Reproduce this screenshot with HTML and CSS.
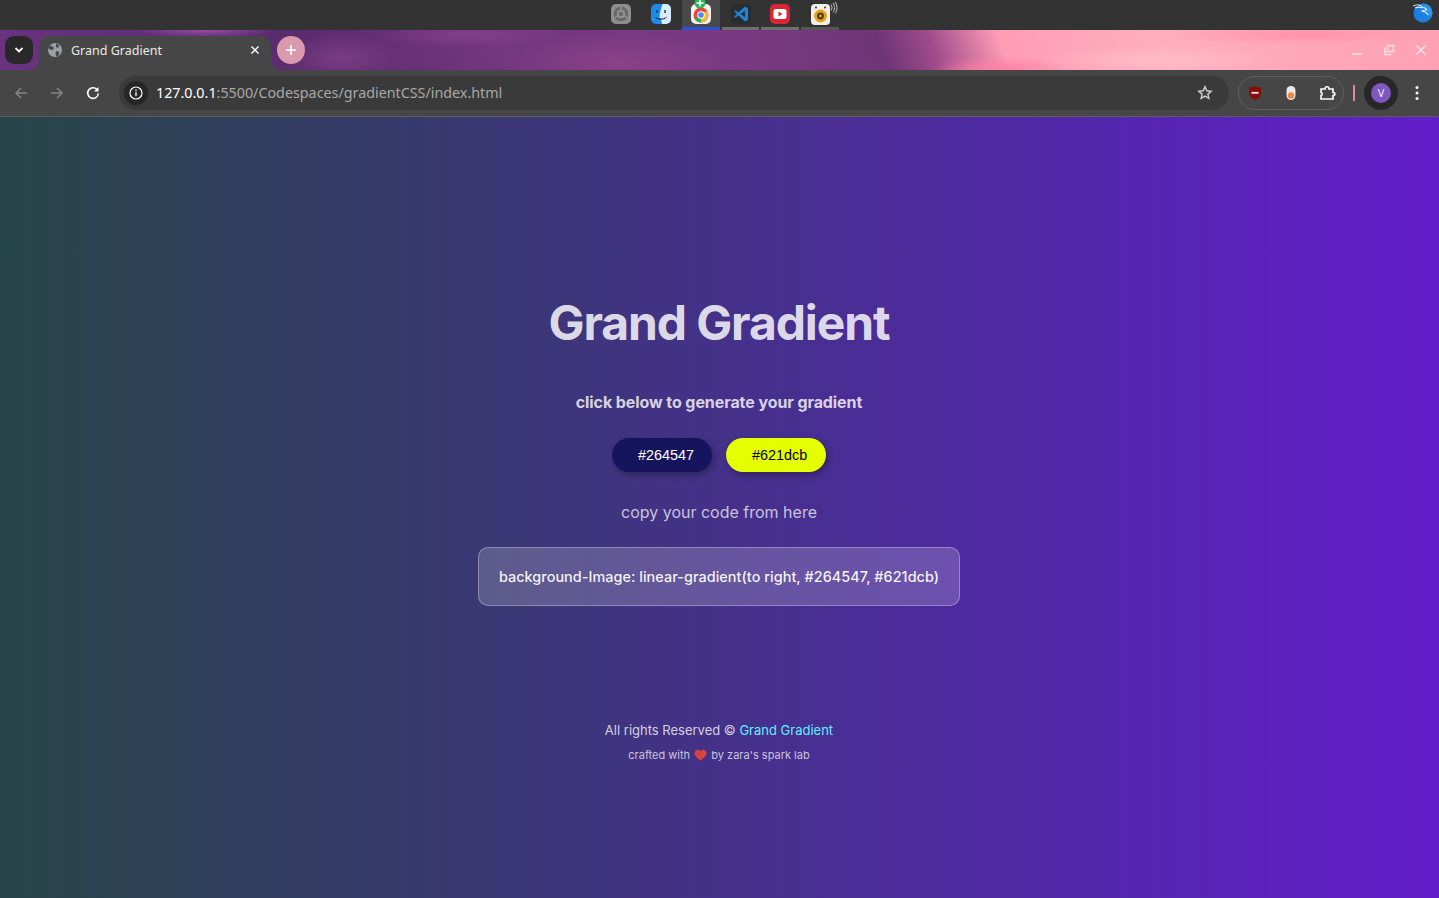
FILE: index.html
```html
<!DOCTYPE html>
<html lang="en">
<head>
<meta charset="utf-8">
<title>Grand Gradient</title>
<link rel="stylesheet" href="styles.css">
</head>
<body>
<div class="dock-bar">
  <div class="dock">
    <div class="dock-item">
      <svg class="dock-icon" viewBox="0 0 22 22"><rect x="1" y="1" width="20" height="20" rx="5" fill="#8d8d8d"/><circle cx="11" cy="11" r="8" fill="#6a6a6a" stroke="#a0a0a0" stroke-width=".8"/><circle cx="11" cy="11" r="3.200" fill="none" stroke="#9a9a9a" stroke-width="1.500"/><path d="M11 4v4M5 14.500l3-2M17 14.500l-3-2" stroke="#989898" stroke-width="1.200"/></svg>
    </div>
    <div class="dock-item">
      <svg class="dock-icon" viewBox="0 0 22 22"><rect x="1" y="1" width="20" height="20" rx="5" fill="#1c8bec"/><path d="M12.500 1H16a5 5 0 0 1 5 5v10a5 5 0 0 1-5 5h-4c-.6-3-.9-4-.9-6H9.500c0-5 1.500-9 3-14z" fill="#d9ecfb"/><path d="M7 7v3M15 7v3" stroke="#123" stroke-width="1.300"/><path d="M5.500 14.500c3 2.300 8 2.300 11-.3" fill="none" stroke="#123" stroke-width="1"/></svg>
    </div>
    <div class="dock-item dock-item-active">
      <svg class="dock-icon" viewBox="0 0 22 22"><rect x="1" y="1" width="20" height="20" rx="5" fill="#f1f1f1"/><circle cx="11" cy="12" r="7.500" fill="#e8453c"/><path d="M11 12 4.500 15.800A7.500 7.500 0 0 0 11 19.500z" fill="#34a853"/><path d="M11 12v7.500A7.500 7.500 0 0 0 18.500 12c0-1.200-.2-2-.7-3.200H11z" fill="#f9bb2d"/><circle cx="11" cy="12" r="3.800" fill="#fff"/><circle cx="11" cy="12" r="2.800" fill="#4a8bf5"/></svg>
      <svg class="dock-plus" viewBox="0 0 12 12"><circle cx="6" cy="6" r="5.500" fill="#2fb35a"/><path d="M6 2.500v7M2.500 6h7" stroke="#fff" stroke-width="1.500"/></svg>
    </div>
    <div class="dock-item dock-item-open dock-item-narrow">
      <svg class="dock-icon" viewBox="0 0 22 22"><rect x="1" y="1" width="20" height="20" rx="5" fill="#2a2c30"/><path d="M15 3.500 8.500 9.500 5.500 7.200 4 8l3 3-3 3 1.500.8 3-2.300 6.500 6 3-1.400V4.900zM15 7.800v6.400L10.700 11z" fill="#1b86dc"/></svg>
    </div>
    <div class="dock-item dock-item-open">
      <svg class="dock-icon" viewBox="0 0 22 22"><rect x="1" y="1" width="20" height="20" rx="5" fill="#d92534"/><rect x="4.500" y="6" width="13" height="10" rx="2.500" fill="#fff"/><path d="m9.500 8.500 4 2.500-4 2.500z" fill="#d92534"/></svg>
    </div>
    <div class="dock-item dock-item-dim">
      <svg class="dock-speaker" viewBox="0 0 28 24"><rect x="1" y="2" width="19" height="21" rx="4" fill="#f2efe6"/><circle cx="10.500" cy="14" r="6.500" fill="#e9a21c"/><circle cx="10.500" cy="14" r="3.400" fill="#4a3a14"/><circle cx="10.500" cy="14" r="1.400" fill="#e9a21c"/><circle cx="6" cy="5.500" r="1" fill="#333"/><circle cx="15" cy="5.500" r="1" fill="#333"/><path d="M21 2.500c1.300 1.500 1.300 4.500 0 6M23 1c2 2.300 2 7 0 9.300M25 0c2.700 3 2.700 8.500 0 11.500" fill="none" stroke="#c8c8c8" stroke-width="1"/></svg>
    </div>
  </div>
  <svg class="tray-icon" viewBox="0 0 20 20"><circle cx="10" cy="10" r="9.500" fill="#1f7fe0"/><path d="M10 .5a9.500 9.500 0 0 1 9.500 9.500c0 2-2 4-6 2" fill="#2c97ea"/><path d="M0 3c4-2 8-1 10 1.500 2 0 3 1 3.500 2.500-2 0-3 0-4.500 1 2 .5 5 1.500 6 4M2 5c3-1 5-1 7 0" fill="none" stroke="#e6f2fb" stroke-width="1.100"/></svg>
</div>

<header class="tab-strip">
  <button class="tab-search" type="button">
    <svg class="tab-search-icon" viewBox="0 0 10 10"><path d="m1.500 3 3.500 3.500L8.500 3" fill="none" stroke="#fff" stroke-width="1.800"/></svg>
  </button>
  <div class="tab">
    <svg class="favicon" viewBox="0 0 16 16"><circle cx="8" cy="8" r="7" fill="#9aa0a6"/><path d="M3 3.500c2 .5 3 1 4 2.500L5.500 8 3 7.500 1.200 6zM9 1.500c1 1 2.500 1 3.500 2L10.500 6 9 5zM9 9l3.500 1-1 3.500L9.500 14.500 8.500 12z" fill="#464646"/></svg>
    <span class="tab-title">Grand Gradient</span>
    <svg class="tab-close" viewBox="0 0 10 10"><path d="m1.500 1.500 7 7m0-7-7 7" stroke="#fff" stroke-width="1.400"/></svg>
  </div>
  <button class="new-tab" type="button">
    <svg class="new-tab-icon" viewBox="0 0 12 12"><path d="M6 1v10M1 6h10" stroke="#fff" stroke-width="1.700"/></svg>
  </button>
  <div class="window-controls">
    <svg class="win-icon" viewBox="0 0 12 12"><path d="M1 10h10" stroke="#f6e3e8" stroke-width="1.600"/></svg>
    <svg class="win-icon" viewBox="0 0 12 12"><path d="M4.500 1.500h6v6h-6zM2 3.500v7h6.500" fill="none" stroke="#f6e3e8" stroke-width="1.500"/></svg>
    <svg class="win-icon" viewBox="0 0 12 12"><path d="m1.500 1.500 9 9m0-9-9 9" stroke="#f6e3e8" stroke-width="1.600"/></svg>
  </div>
</header>

<nav class="toolbar">
  <svg class="nav-icon" viewBox="0 0 14 14"><path d="M13 7H2M7 2 2 7l5 5" fill="none" stroke="#858585" stroke-width="1.500"/></svg>
  <svg class="nav-icon" viewBox="0 0 14 14"><path d="M1 7h11M7 2l5 5-5 5" fill="none" stroke="#858585" stroke-width="1.500"/></svg>
  <svg class="nav-icon" viewBox="0 0 14 14"><path d="M11.500 4.200A5.300 5.300 0 1 0 12.300 7.500" fill="none" stroke="#fff" stroke-width="1.600"/><path d="M12.500 1v4.500H8z" fill="#fff"/></svg>
  <div class="omnibox">
    <span class="site-info">
      <svg class="site-info-icon" viewBox="0 0 14 14"><circle cx="7" cy="7" r="6" fill="none" stroke="#fff" stroke-width="1.200"/><path d="M7 6v4.200M7 3.600v1.300" stroke="#fff" stroke-width="1.300"/></svg>
    </span>
    <span class="url"><span class="url-host">127.0.0.1</span>:5500/Codespaces/gradientCSS/index.html</span>
    <svg class="star" viewBox="0 0 16 16"><path d="m8 1.800 1.800 4 4.400.4-3.300 2.900 1 4.300L8 11.100l-3.900 2.300 1-4.300-3.300-2.900 4.400-.4z" fill="none" stroke="#d0d0d0" stroke-width="1.400"/></svg>
  </div>
  <div class="extensions">
    <svg class="ext-icon" viewBox="0 0 16 16"><path d="M8 1c2 1 4 1.500 6 1.500V8c0 3-2.500 5.500-6 7-3.500-1.500-6-4-6-7V2.500C4 2.500 6 2 8 1z" fill="#8a0b0b"/><path d="M4.500 7.800h7" stroke="#eee" stroke-width="1.800"/></svg>
    <svg class="ext-icon" viewBox="0 0 16 16"><rect x="3.500" y="1" width="9" height="14" rx="4.500" fill="#e8e8e8"/><circle cx="8" cy="10.500" r="3.200" fill="#f08a35"/></svg>
    <svg class="ext-icon" viewBox="0 0 18 18"><path d="M2 5h4c0-3 4-3 4 0h4v3.500c2.500 0 2.500 3 0 3V15H2v-3.500c1.500 0 1.500-3 0-3z" fill="none" stroke="#fff" stroke-width="1.600"/></svg>
  </div>
  <span class="toolbar-divider"></span>
  <div class="avatar-ring"><span class="avatar">V</span></div>
  <svg class="menu-dots" viewBox="0 0 4 16"><circle cx="2" cy="2.500" r="1.500" fill="#fff"/><circle cx="2" cy="8" r="1.500" fill="#fff"/><circle cx="2" cy="13.500" r="1.500" fill="#fff"/></svg>
</nav>

<main class="page">
  <h1 class="title">Grand Gradient</h1>
  <h3 class="subtitle">click below to generate your gradient</h3>
  <div class="buttons">
    <button class="color-btn color-btn-dark" type="button">#264547</button>
    <button class="color-btn color-btn-lime" type="button">#621dcb</button>
  </div>
  <p class="copy-label">copy your code from here</p>
  <div class="code-box">background-Image: linear-gradient(to right, #264547, #621dcb)</div>
  <footer class="footer">
    <p class="rights">All rights Reserved © <a class="brand-link" href="#">Grand Gradient</a></p>
    <p class="crafted">crafted with <svg class="heart" viewBox="0 0 14 13"><path d="M7 12.500C3 9.500.5 7.300.5 4.300.5 2.200 2.100.8 3.900.8 5.200.8 6.300 1.500 7 2.700 7.700 1.500 8.800.8 10.100.8c1.800 0 3.400 1.400 3.400 3.500 0 3-2.500 5.200-6.500 8.200z" fill="#d9423f"/></svg> by zara's spark lab</p>
  </footer>
</main>
</body>
</html>
```

FILE: styles.css
```css
* { box-sizing: border-box; }
html, body { margin: 0; height: 898px; overflow: hidden; }
body {
  display: flex;
  flex-direction: column;
  font-family: "Inter", "Liberation Sans", sans-serif;
  background: #333;
}
.dock-bar {
  flex: 0 0 30px;
  display: flex;
  justify-content: center;
  position: relative;
  background: #333;
}
.dock { display: flex; margin-left: 2px; }
.dock-item {
  width: 40px;
  height: 30px;
  display: flex;
  align-items: flex-start;
  justify-content: center;
  padding-top: 3px;
  position: relative;
  border-bottom: 3px solid transparent;
  background-clip: padding-box;
}
.dock-item-active { border-bottom-color: #2b4fd6; background-color: #494949; margin: 0 1px; width: 38px; }
.dock-item-open { border-bottom-color: #6f6f6f; margin: 0 1px; width: 38px; }
.dock-item-narrow { width: 37px; }
.dock-item-dim { border-bottom-color: #565656; margin: 0 1px; width: 38px; }
.dock-icon { width: 22px; height: 22px; flex: none; }
.dock-speaker { width: 28px; height: 24px; flex: none; margin: -1px 0 0 7px; }
.dock-plus {
  position: absolute;
  top: -3px;
  left: 12px;
  width: 12px;
  height: 12px;
}
.tray-icon { position: absolute; right: 6px; top: 3px; width: 20px; height: 20px; }

.tab-strip {
  flex: 0 0 40px;
  display: flex;
  align-items: flex-start;
  padding: 6px 12px 0 5px;
  background:
    radial-gradient(ellipse 70px 8px at 205px 0, #94509a, transparent),
    radial-gradient(ellipse 90px 12px at 470px 5px, #84408a, transparent),
    radial-gradient(ellipse 60px 25px at 340px 70%, #7a3c86, transparent),
    radial-gradient(ellipse 110px 30px at 620px 80%, #8a4288, transparent),
    radial-gradient(ellipse 70px 14px at 1000px 40px, #ff7fa4, transparent),
    radial-gradient(ellipse 120px 14px at 1160px 30px, #ffbcc8, transparent),
    radial-gradient(ellipse 130px 10px at 1300px 5px, #ff93ab, transparent),
    linear-gradient(70deg, #6a3380 0, #5a2a6e 290px, #743780 480px, #7a3982 700px, #6e3576 835px, #a04c8c 885px, #ff9cb6 950px, #ffaebf 1100px, #ffa0b4 1366px);
}
.tab-search {
  width: 28px;
  height: 28px;
  border: 0;
  padding: 0;
  border-radius: 9px;
  background: #282828;
  display: flex;
  align-items: center;
  justify-content: center;
}
.tab-search-icon { width: 10px; height: 10px; }
.tab {
  width: 232px;
  height: 34px;
  margin-left: 6px;
  padding: 0 11px 6px 8px;
  display: flex;
  align-items: center;
  position: relative;
  background: #464646;
  border-radius: 10px 10px 0 0;
  color: #e8e8e8;
  font: 12.500px "Noto Sans", "Open Sans", sans-serif;
}
.tab::before,
.tab::after {
  content: "";
  position: absolute;
  bottom: 0;
  width: 10px;
  height: 10px;
}
.tab::before { left: -10px; background: radial-gradient(circle at 0 0, transparent 9.500px, #464646 10px); }
.tab::after { right: -10px; background: radial-gradient(circle at 100% 0, transparent 9.500px, #464646 10px); }
.favicon { width: 16px; height: 16px; margin-right: 8px; }
.tab-title { flex: 1; }
.tab-close { width: 10px; height: 10px; }
.new-tab {
  width: 28px;
  height: 28px;
  margin-left: 6px;
  border: 0;
  padding: 0;
  border-radius: 50%;
  background: #d99aab;
  display: flex;
  align-items: center;
  justify-content: center;
}
.new-tab-icon { width: 12px; height: 12px; }
.window-controls {
  margin-left: auto;
  height: 28px;
  display: flex;
  align-items: center;
  gap: 20px;
}
.win-icon { width: 12px; height: 12px; }

.toolbar {
  flex: 0 0 47px;
  display: flex;
  align-items: center;
  padding: 0 15px 1px 14px;
  background: #464646;
  border-bottom: 1px solid #5e5e5e;
}
.nav-icon { width: 14px; height: 14px; margin-right: 22px; }
.nav-icon:nth-child(3) { margin-right: 19px; }
.omnibox {
  width: 1110px;
  height: 34px;
  display: flex;
  align-items: center;
  padding: 0 16px 0 5px;
  border-radius: 17px;
  background: #3a3a3a;
  color: #a8a8a8;
  font: 14.300px "Noto Sans", "Open Sans", sans-serif;
}
.site-info {
  width: 24px;
  height: 24px;
  margin-right: 8px;
  border-radius: 50%;
  background: #262626;
  display: flex;
  align-items: center;
  justify-content: center;
}
.site-info-icon { width: 14px; height: 14px; }
.url { flex: 1; }
.url-host { color: #fff; }
.star { width: 16px; height: 16px; }
.extensions {
  width: 106px;
  height: 34px;
  margin-left: 9px;
  padding: 0 6px 0 8px;
  display: flex;
  align-items: center;
  justify-content: space-between;
  border: 1px solid #5f5f5f;
  border-radius: 17px;
}
.ext-icon { width: 16px; height: 16px; }
.ext-icon:last-child { width: 18px; height: 18px; }
.toolbar-divider {
  width: 2px;
  height: 16px;
  margin-left: 9px;
  background: #d98aa4;
}
.avatar-ring {
  width: 34px;
  height: 34px;
  margin-left: 9px;
  border-radius: 50%;
  background: #272727;
  display: flex;
  align-items: center;
  justify-content: center;
}
.avatar {
  width: 20px;
  height: 20px;
  border-radius: 50%;
  background: #7e57c2;
  color: #eee;
  font: 11px/20px "Noto Sans", sans-serif;
  text-align: center;
}
.menu-dots { width: 4px; height: 16px; margin-left: 17px; }

.page {
  flex: 1;
  display: flex;
  flex-direction: column;
  align-items: center;
  padding: 176px 1px 0 0;
  background-image: linear-gradient(to right, #264547, #621dcb);
}
.title {
  margin: 0;
  color: rgba(255, 255, 255, 0.84);
  font-size: 48px;
  line-height: 60px;
  font-weight: 700;
  letter-spacing: -1.100px;
}
.subtitle {
  margin: 40px 0 0;
  color: rgba(255, 255, 255, 0.8);
  font-size: 16px;
  line-height: 19px;
  font-weight: 700;
  letter-spacing: -0.080px;
}
.buttons { display: flex; gap: 14px; margin-top: 26px; }
.color-btn {
  width: 100px;
  height: 34px;
  border: 0;
  border-radius: 17px;
  font: 14.400px "Liberation Sans", sans-serif;
  text-align: left;
  padding: 0 0 0 26px;
  box-shadow: 2px 3px 6px rgba(0, 0, 0, 0.3);
}
.color-btn-dark { background: #15145c; color: #fff; }
.color-btn-lime { background: #e6ff00; color: #000; }
.copy-label {
  margin: 30px 0 0;
  color: rgba(255, 255, 255, 0.72);
  font-size: 16px;
  line-height: 20px;
}
.code-box {
  width: 482px;
  height: 59px;
  margin-top: 25px;
  display: flex;
  align-items: center;
  justify-content: center;
  border: 1px solid rgba(255, 255, 255, 0.3);
  border-radius: 10px;
  background: rgba(255, 255, 255, 0.18);
  color: rgba(255, 255, 255, 0.95);
  font-size: 14.400px;
  font-weight: 500;
  letter-spacing: 0.050px;
}
.footer { margin-top: 116px; text-align: center; }
.rights {
  margin: 0;
  color: rgba(255, 255, 255, 0.78);
  font-size: 13px;
  line-height: 16px;
}
.brand-link { color: #5ff0ff; text-decoration: none; }
.crafted {
  margin: 10px 0 0;
  color: rgba(255, 255, 255, 0.72);
  font-size: 11px;
  line-height: 14px;
}
.heart { width: 13px; height: 12px; vertical-align: -2px; margin: 0 1px; }
```
